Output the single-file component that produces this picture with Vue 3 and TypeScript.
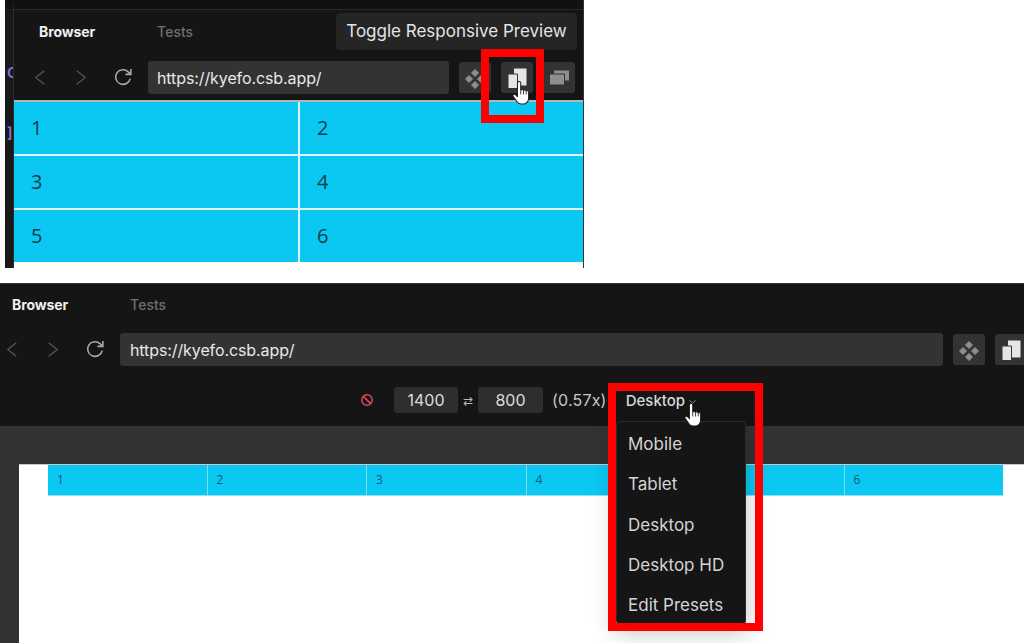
<template>
  <div class="page">
    <!-- cropped shot: small preview panel -->
    <section class="shot-top">
      <div class="code-strip">
        <span class="code-a">C</span>
        <span class="code-b">]</span>
      </div>
      <div class="panel">
        <div class="tabs">
          <span class="tab active">Browser</span>
          <span class="tab">Tests</span>
        </div>
        <div class="toolbar">
          <svg class="nav-icon" viewBox="0 0 14 18"><path d="M12 1 2 9l10 8" /></svg>
          <svg class="nav-icon" viewBox="0 0 14 18"><path d="m2 1 10 8-10 8" /></svg>
          <svg class="reload" viewBox="0 0 20 20"><path d="M16.400 11a7 7 0 1 1-1.900-6.400L17 7M17 1.800V7h-5.200" /></svg>
          <div class="url">https://kyefo.csb.app/</div>
          <div class="tool-btn">
            <svg viewBox="0 0 22 22"><path :d="diamondPath" fill="#8e8e8e" stroke="#8e8e8e" stroke-linejoin="round" /></svg>
          </div>
          <div class="tool-btn">
            <svg viewBox="0 0 22 22"><path :d="backSheet" fill="#e6e6e6" /><path :d="frontSheet" fill="#e6e6e6" stroke="#333" /></svg>
          </div>
          <div class="tool-btn">
            <svg viewBox="0 0 22 22"><path d="M6 3.500h15v10H6z" fill="#8e8e8e" /><path d="M1.500 7h15v11h-15z" fill="#8e8e8e" stroke="#333" /></svg>
          </div>
        </div>
        <div class="big-grid">
          <div v-for="n in 6" :key="n" class="big-cell">{{ n }}</div>
        </div>
      </div>
      <div class="tooltip">Toggle Responsive Preview</div>
      <div class="red-box box-toggle"></div>
      <svg class="cursor cursor-top" viewBox="1 2 19 25">
        <path :d="handPath" fill="#fff" stroke="#222" stroke-width="1.100" stroke-linejoin="round" />
        <path :d="fingerLines" fill="none" stroke="#222" stroke-width="0.900" />
      </svg>
    </section>

    <!-- cropped shot: responsive mode open -->
    <section class="shot-bottom">
      <div class="tabs wide">
        <span class="tab active">Browser</span>
        <span class="tab">Tests</span>
      </div>
      <div class="toolbar wide">
        <svg class="nav-icon" viewBox="0 0 14 18"><path d="M12 1 2 9l10 8" /></svg>
        <svg class="nav-icon" viewBox="0 0 14 18"><path d="m2 1 10 8-10 8" /></svg>
        <svg class="reload" viewBox="0 0 20 20"><path d="M16.400 11a7 7 0 1 1-1.900-6.400L17 7M17 1.800V7h-5.200" /></svg>
        <div class="url grow">https://kyefo.csb.app/</div>
        <div class="tool-btn">
          <svg viewBox="0 0 22 22"><path :d="diamondPath" fill="#8e8e8e" stroke="#8e8e8e" stroke-linejoin="round" /></svg>
        </div>
        <div class="tool-btn">
          <svg viewBox="0 0 22 22"><path :d="backSheet" fill="#e6e6e6" /><path :d="frontSheet" fill="#e6e6e6" stroke="#333" /></svg>
        </div>
      </div>
      <div class="size-row">
        <svg class="stop" viewBox="0 0 14 14"><circle cx="7" cy="7" r="5.200" /><path d="m3.400 3.400 7.200 7.200" /></svg>
        <div class="size-input first">1400</div>
        <span class="swap">⇄</span>
        <div class="size-input">800</div>
        <span class="scale">(0.57x)</span>
        <span class="preset">Desktop</span>
        <svg class="chevron" viewBox="0 0 10 6"><path d="m1.500 1 3.500 3.500L8.500 1" /></svg>
      </div>
      <div class="canvas">
        <div class="frame">
          <div class="mini-grid">
            <div v-for="n in 6" :key="n" class="mini-cell">{{ n }}</div>
          </div>
        </div>
      </div>
      <ul class="menu">
        <li v-for="item in presets" :key="item">{{ item }}</li>
      </ul>
      <div class="red-box box-menu"></div>
      <svg class="cursor cursor-bottom" viewBox="1 2 19 25">
        <path :d="handPath" fill="#fff" stroke="#222" stroke-width="1.100" stroke-linejoin="round" />
        <path :d="fingerLines" fill="none" stroke="#222" stroke-width="0.900" />
      </svg>
    </section>
  </div>
</template>

<script setup lang="ts">
const presets = ['Mobile', 'Tablet', 'Desktop', 'Desktop HD', 'Edit Presets'];

const diamondPath =
  'M11 2.500 14.500 6 11 9.500 7.500 6zM5 8.500 8.500 12 5 15.500 1.500 12zM17 8.500l3.500 3.500-3.500 3.500-3.500-3.500zM11 14.500l3.500 3.500-3.500 3.500L7.500 18z';
const backSheet = 'M8 1.500h12.500v17H8z';
const frontSheet = 'M2 7h9.500v14.500H2z';

const handPath =
  'M8 2.500c1 0 1.700.7 1.700 1.700v7.300c.3-.8 2.600-.9 2.900.2.500-.7 2.400-.7 2.800.5.600-.5 2.500-.3 2.500 1.300v6.500c0 3.200-2.400 6-5.800 6h-2c-2.200 0-3.500-1-4.500-2.600L1.800 18c-.9-1.500 1-2.900 2.300-1.700l2.200 2V4.200c0-1 .7-1.700 1.700-1.700z';
const fingerLines = 'M9.700 11.500v4.500M12.600 11.700v4.300M15.400 12.200v3.800';
</script>

<style>
html,
body {
  margin: 0;
  background: #fff;
}
</style>

<style scoped>
.page {
  width: 1024px;
  height: 643px;
  overflow: hidden;
  position: relative;
  background: #fff;
  font-family: Inter, "Liberation Sans", sans-serif;
}

.shot-top {
  position: relative;
  display: flex;
  width: 579px;
  height: 268px;
  margin-left: 5px;
  margin-bottom: 15px;
  background: #151515;
  border-right: 1px solid #333;
  box-sizing: border-box;
}

.code-strip {
  flex: none;
  width: 9px;
  padding-top: 58px;
  border-top: 9px solid #111;
  box-sizing: border-box;
  display: flex;
  flex-direction: column;
  overflow: hidden;
  background: #191919;
  border-right: 1px solid #2b2b2b;
  font-size: 15px;
  font-weight: 600;
  color: #8d6fd0;
}

.code-a {
  margin-left: 2px;
  line-height: 12px;
}

.code-b {
  margin-top: 48px;
  margin-left: 2px;
  line-height: 12px;
}

.panel {
  flex: 1;
  min-width: 0;
  border-top: 9px solid #111;
  box-shadow: inset 0 1px 0 #2a2a2a;
  background: linear-gradient(#151515 253px, #fff 253px);
}

.tabs {
  display: flex;
  align-items: center;
  height: 45px;
  padding-left: 25px;
  gap: 62px;
  font-size: 14px;
}

.tabs.wide {
  height: 42px;
  padding-left: 12px;
  gap: 62px;
}

.tab {
  font-weight: 500;
  color: #6e6e6e;
}

.tab.active {
  font-weight: 700;
  color: #f0f0f0;
  letter-spacing: -0.1px;
}

.toolbar {
  display: flex;
  align-items: center;
  height: 33px;
  margin-top: 7px;
  margin-bottom: 6px;
  padding-left: 20px;
}

.toolbar.wide {
  margin-top: 8px;
  margin-bottom: 0;
  padding-left: 6px;
}

.nav-icon {
  flex: none;
  width: 12px;
  height: 17px;
  margin-right: 28.500px;
  fill: none;
  stroke: #555;
  stroke-width: 1.500;
}

.reload {
  flex: none;
  width: 21px;
  height: 21px;
  margin-left: -2px;
  margin-right: 14px;
  fill: none;
  stroke: #a8a8a8;
  stroke-width: 1.500;
}

.url {
  flex: none;
  width: 301px;
  height: 33px;
  line-height: 34px;
  padding-left: 9px;
  box-sizing: border-box;
  border-radius: 3px;
  background: #333;
  color: #e8e8e8;
  font-size: 16px;
  letter-spacing: -0.1px;
}

.url.grow {
  width: 823px;
  padding-left: 10px;
}

.tool-btn {
  flex: none;
  display: flex;
  align-items: center;
  justify-content: center;
  width: 32px;
  height: 31px;
  margin-left: 10px;
  border-radius: 3px;
  background: #333;
}

.tool-btn svg {
  width: 22px;
  height: 22px;
}

.big-grid {
  display: grid;
  grid-template-columns: 286px 1fr;
  grid-template-rows: 54px 54px 52px;
  height: 162px;
  border-top: 2px solid #b5b5b5;
  box-sizing: border-box;
  background: #0bc8f2;
}

.big-cell {
  display: flex;
  align-items: center;
  padding: 0 0 2px 17px;
  box-sizing: border-box;
  border-bottom: 2px solid #e4f3f7;
  font-family: "Open Sans", sans-serif;
  font-size: 20px;
  color: #0c3d4d;
}

.big-cell:nth-child(odd) {
  border-right: 2px solid #e4f3f7;
}

.big-cell:nth-child(n + 5) {
  border-bottom: none;
}

.tooltip {
  position: absolute;
  left: 331px;
  top: 13px;
  width: 241px;
  height: 37px;
  line-height: 37px;
  text-align: center;
  border-radius: 4px;
  background: #252525;
  color: #e4e4e4;
  font-size: 17px;
}

.red-box {
  position: absolute;
  box-sizing: border-box;
  border: 8px solid #f00;
}

.box-toggle {
  left: 476px;
  top: 49px;
  width: 63px;
  height: 74px;
}

.cursor {
  position: absolute;
  width: 21px;
  height: 24px;
}

.cursor-top {
  left: 506px;
  top: 81px;
}

.shot-bottom {
  position: relative;
  height: 360px;
  background: #151515;
  box-shadow: inset 0 1px 0 #333;
}

.size-row {
  display: flex;
  align-items: center;
  height: 26px;
  margin-top: 21px;
  font-size: 16px;
  color: #c8c8c8;
}

.stop {
  flex: none;
  width: 14px;
  height: 14px;
  margin-left: 360px;
  fill: none;
  stroke: #e0465a;
  stroke-width: 1.500;
}

.size-input {
  width: 65px;
  height: 26px;
  line-height: 26px;
  text-align: center;
  border-radius: 3px;
  background: #2e2e2e;
  color: #dcdcdc;
}

.size-input.first {
  width: 64px;
  margin-left: 20px;
}

.swap {
  width: 20px;
  text-align: center;
  font-size: 12px;
  color: #b8b8b8;
}

.scale {
  margin-left: 9px;
  letter-spacing: 0.2px;
}

.preset {
  margin-left: 19px;
  font-size: 15px;
  font-weight: 500;
  color: #d8d8d8;
}

.chevron {
  width: 9px;
  height: 6px;
  margin-left: 3px;
  margin-top: 3px;
  fill: none;
  stroke: #999;
  stroke-width: 1;
}

.canvas {
  height: 217px;
  margin-top: 13px;
  padding: 38px 0 0 19px;
  box-sizing: border-box;
  background: #333;
  overflow: hidden;
}

.frame {
  height: 300px;
  padding-left: 29px;
  background: #fff;
  border-top: 1px solid #c8c8c8;
}

.mini-grid {
  display: grid;
  grid-template-columns: 159.500px 159.500px 159.500px 159px 159px 158.500px;
  width: 955px;
  height: 31px;
  background: #0bc8f2;
  border-bottom: 1px solid #8fe3f7;
  box-sizing: border-box;
}

.mini-cell {
  padding-left: 9px;
  box-sizing: border-box;
  border-right: 1px solid #7ddcf3;
  line-height: 29px;
  font-family: "Open Sans", sans-serif;
  font-size: 12px;
  color: #14586d;
}

.mini-cell:last-child {
  border-right: none;
}

.menu {
  position: absolute;
  left: 616px;
  top: 138px;
  width: 130px;
  height: 203px;
  margin: 0;
  padding: 2px 0 0;
  box-sizing: border-box;
  list-style: none;
  border-radius: 3px;
  border: 1px solid #2a2a2a;
  background: #151515;
  box-shadow: 0 8px 24px rgba(0, 0, 0, 0.25);
}

.menu li {
  height: 40.300px;
  line-height: 40.300px;
  padding-left: 11px;
  font-size: 17px;
  color: #d4d4d4;
}

.box-menu {
  left: 608px;
  top: 100px;
  width: 155px;
  height: 248px;
}

.cursor-bottom {
  left: 683px;
  top: 120px;
}
</style>
